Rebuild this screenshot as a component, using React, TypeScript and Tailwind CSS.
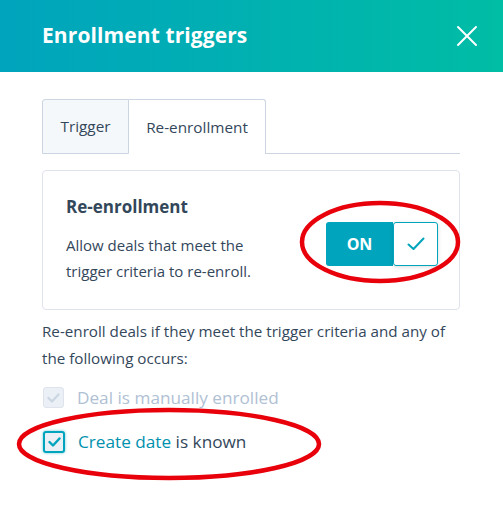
import React from "react";

export default function App() {
  return (
    <div
      className="relative w-[503px] h-[510px] bg-white overflow-hidden"
      style={{ fontFamily: "'Open Sans', Lato, sans-serif" }}
    >
      {/* Header */}
      <div className="h-[72px] flex items-center justify-between pl-[42px] pr-[24px] bg-[linear-gradient(90deg,#00a4bd_0%,#00bda5_100%)]">
        <h1 className="text-white font-bold text-[21px] tracking-[0.1px]">Enrollment triggers</h1>
        <svg width="22" height="22" viewBox="0 0 22 22" className="mr-[1px]">
          <path d="M2 2 L20 20 M20 2 L2 20" stroke="white" strokeWidth="2" strokeLinecap="round" />
        </svg>
      </div>

      <div className="px-[42px] pt-[27px]">
        {/* Tabs */}
        <div className="flex items-end h-[55px] w-[418px]">
          <div className="h-[55px] w-[87px] flex items-center justify-center bg-[#f5f8fa] border border-[#cbd6e2] rounded-tl-[3px] text-[#33475b] text-[15.3px]">
            Trigger
          </div>
          <div className="h-[55px] w-[137px] flex items-center justify-center bg-white border border-l-0 border-b-0 border-[#cbd6e2] rounded-tr-[3px] text-[#33475b] text-[15.3px]">
            Re-enrollment
          </div>
          <div className="flex-1 border-b border-[#cbd6e2]" />
        </div>

        {/* Card */}
        <div className="mt-[16px] w-[418px] h-[140px] border border-[#dfe3eb] rounded-[4px] pl-[23px] pr-[22px] flex items-center justify-between">
          <div>
            <div className="text-[#33475b] font-bold text-[17px] leading-[22px]">Re-enrollment</div>
            <div className="mt-[14px] text-[#33475b] text-[15px] leading-[26px]">
              Allow deals that meet the
              <br />
              trigger criteria to re-enroll.
            </div>
          </div>
          <div className="flex h-[44px] mt-[7px] mr-[-1px]">
            <div className="w-[67px] bg-[#00a4bd] rounded-l-[3px] flex items-center justify-center text-white font-bold text-[16px]">
              ON
            </div>
            <div className="w-[45px] bg-white border border-[#00a4bd] rounded-[3px] flex items-center justify-center shadow-[0_1px_4px_rgba(0,0,0,0.15)]">
              <svg width="18" height="14" viewBox="0 0 18 14">
                <path d="M1.5 7.5 L6.5 12 L16.5 1.5" fill="none" stroke="#00a4bd" strokeWidth="2" strokeLinecap="round" strokeLinejoin="round" />
              </svg>
            </div>
          </div>
        </div>

        {/* Description */}
        <div className="mt-[8px] text-[#33475b] text-[15.2px] leading-[27px]">
          Re-enroll deals if they meet the trigger criteria and any of
          <br />
          the following occurs:
        </div>

        {/* Checkboxes */}
        <div className="mt-[13px] flex flex-col gap-[18px]">
          <div className="flex items-center gap-[13px] ml-[1px]">
            <div className="w-[21px] h-[21px] rounded-[3px] bg-[#eaf0f6] border border-[#dfe3eb] flex items-center justify-center">
              <svg width="13" height="10" viewBox="0 0 13 10">
                <path d="M1.5 5 L5 8.5 L11.5 1.5" fill="none" stroke="#cbd6e2" strokeWidth="2.2" strokeLinecap="round" strokeLinejoin="round" />
              </svg>
            </div>
            <span className="text-[#b0c1d4] text-[17.2px]">Deal is manually enrolled</span>
          </div>
          <div className="flex items-center gap-[13px] ml-[1px]">
            <div className="w-[22px] h-[22px] rounded-[3px] bg-[#eaf0f6] border-2 border-[#00a4bd] flex items-center justify-center shadow-[0_0_3px_rgba(0,164,189,0.6)]">
              <svg width="13" height="10" viewBox="0 0 13 10">
                <path d="M1.5 5 L5 8.5 L11.5 1.5" fill="none" stroke="#00a4bd" strokeWidth="2.4" strokeLinecap="round" strokeLinejoin="round" />
              </svg>
            </div>
            <span className="text-[17.2px]">
              <span className="text-[#0091ae]">Create date</span>
              <span className="text-[#33475b]"> is known</span>
            </span>
          </div>
        </div>
      </div>

      {/* Annotation ellipses */}
      <svg className="absolute left-0 top-0 pointer-events-none" width="503" height="510">
        <ellipse cx="380" cy="242" rx="78" ry="39" fill="none" stroke="#e8000b" strokeWidth="4.5" />
        <ellipse cx="169" cy="444" rx="150" ry="34" fill="none" stroke="#e8000b" strokeWidth="4.5" />
      </svg>
    </div>
  );
}
